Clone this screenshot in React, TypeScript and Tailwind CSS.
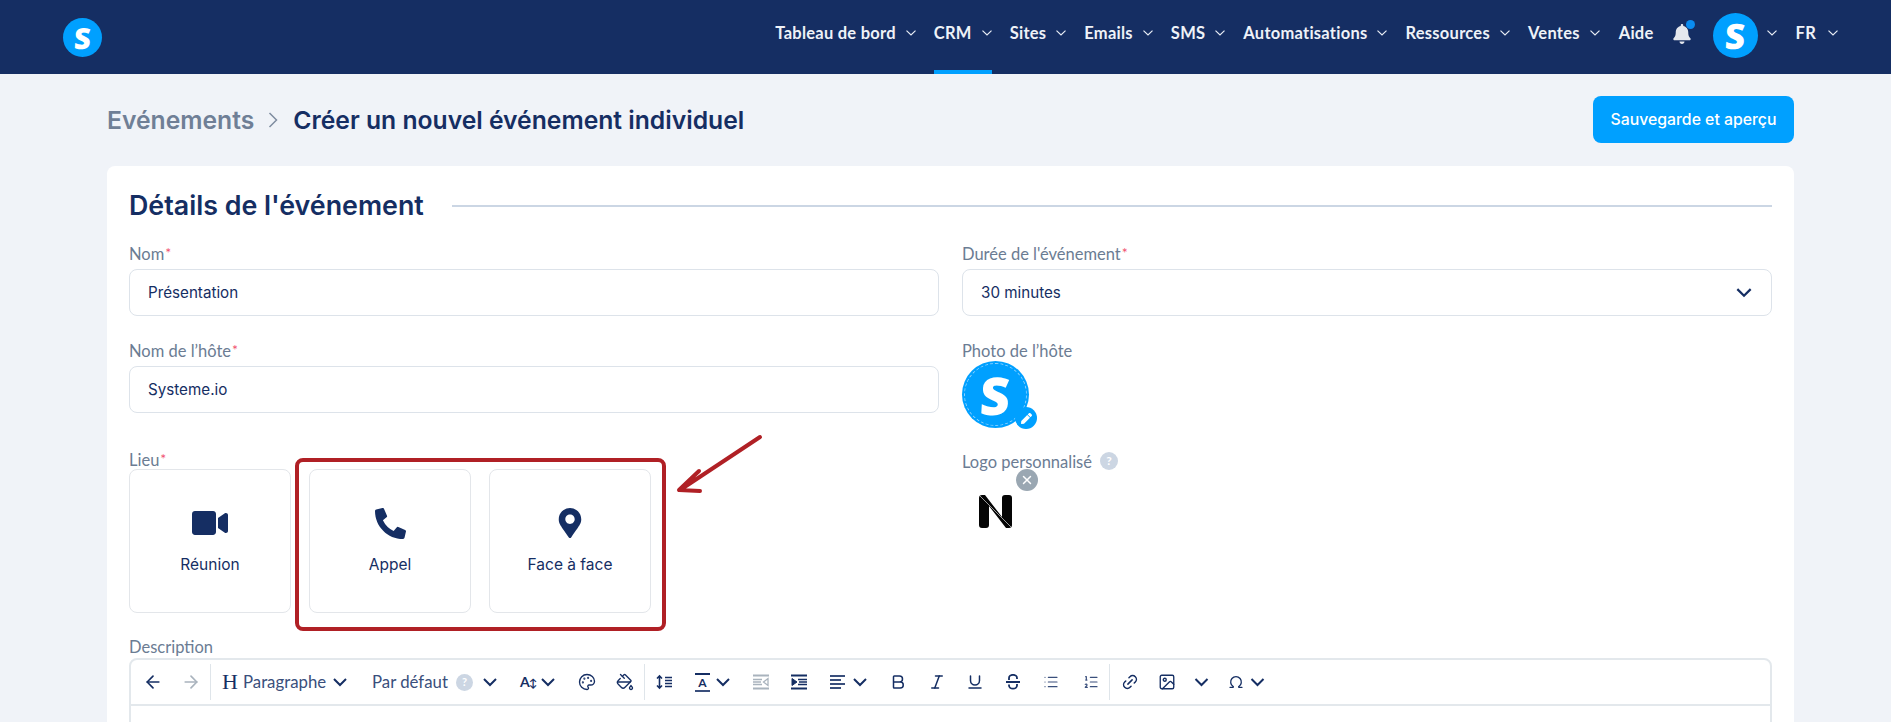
import React from "react";
import { FaBell, FaVideo, FaPhoneAlt, FaMapMarkerAlt, FaPen } from "react-icons/fa";
import { ArrowLeft, ArrowRight, Palette, PaintBucket, Bold, Italic, Underline, List, ListOrdered, Link2, Image, Omega, X } from "lucide-react";

const lato = "font-['Lato','Noto_Sans',sans-serif]";
const inter = "font-['Inter','Liberation_Sans',sans-serif]";
const navText = "text-[16.5px] tracking-[0.25px] font-bold text-[#eef2f8] whitespace-nowrap leading-none pb-[8px]";

function LogoS({ size }: { size: string }) {
  return (
    <span className={`font-['Open_Sans',sans-serif] font-extrabold text-white leading-none inline-block -skew-x-3 ${size}`}>S</span>
  );
}

function NavChev({ className = "" }: { className?: string }) {
  return (
    <svg viewBox="0 0 10 6" className={"w-[10px] h-[6px] shrink-0 " + className} fill="none" stroke="#e8edf5" strokeWidth="1.2">
      <polyline points="0.5,0.6 5,5 9.5,0.6" />
    </svg>
  );
}

function Chev({ dim = "w-[14px] h-[9px]", className = "" }: { dim?: string; className?: string }) {
  return (
    <svg viewBox="0 0 14 9" className={dim + " shrink-0 " + className} fill="none" stroke="#152e63" strokeWidth="2">
      <polyline points="1,1 7,7 13,1" />
    </svg>
  );
}

function NavItem({ label, active }: { label: string; active?: boolean }) {
  return (
    <div className="relative flex h-[74px] items-center ml-[18px]">
      <span className={navText}>{label}</span>
      <NavChev className="ml-[10px] mb-[8px]" />
      {active && <div className="absolute bottom-0 left-0 right-0 h-[4px] bg-[#00a0ff]" />}
    </div>
  );
}

function Label({ text, req, className = "" }: { text: string; req?: boolean; className?: string }) {
  return (
    <div className={`${lato} h-[20px] pt-[2px] flex items-center text-[16.5px] leading-[20px] text-[#6b7c93] ${className}`}>
      {text}
      {req && <span className="text-[#f0506e] text-[14px] ml-[1px] -mt-[3px]">*</span>}
    </div>
  );
}

function Field({ value, chevron }: { value: string; chevron?: boolean }) {
  return (
    <div className={`${inter} mt-[6px] h-[47px] pt-[1px] rounded-[8px] border border-[#dde3ea] bg-white flex items-center justify-between pl-[18px] pr-[19px] text-[15.2px] text-[#152e63]`}>
      <span>{value}</span>
      {chevron && <Chev dim="w-[16px] h-[10px]" />}
    </div>
  );
}

function LocationCard({ icon, label }: { icon: React.ReactNode; label: string }) {
  return (
    <div className="w-[162px] h-[144px] rounded-[8px] border border-[#e3e6ea] bg-white flex flex-col items-center">
      <div className="h-[32px] mt-[37px] flex items-center justify-center text-[#152e63]">{icon}</div>
      <div className={`${inter} mt-[15px] text-[15.5px] font-normal text-[#152e63] leading-[22px]`}>{label}</div>
    </div>
  );
}

function Slot({ w, className = "", children }: { w: string; className?: string; children: React.ReactNode }) {
  return <div className={`flex justify-center items-center shrink-0 ${w} ${className}`}>{children}</div>;
}

function Sep({ className = "" }: { className?: string }) {
  return <div className={`w-px h-[36px] bg-[#dfe5ea] shrink-0 ${className}`} />;
}

const ic = "w-[18px] h-[18px] shrink-0";

function Indent({ color, flip }: { color: string; flip?: boolean }) {
  return (
    <svg viewBox="0 0 16 16" className="w-[16px] h-[16px] shrink-0" fill="none" stroke={color} strokeWidth="1.8">
      <path d="M0 1.5h16M0 14.5h16" strokeWidth="2" />
      {flip ? (
        <>
          <path d="M0 5.5h9M0 8h8M0 10.5h9" strokeWidth="1.3" />
          <path d="M15 4.5v7L10.5 8z" strokeWidth="1.3" />
        </>
      ) : (
        <>
          <path d="M7 5.5h9M8 8h8M7 10.5h9" strokeWidth="1.5" />
          <path d="M1 4.5v7L6 8z" fill={color} strokeWidth="1" />
        </>
      )}
    </svg>
  );
}

function Toolbar() {
  return (
    <div className={`${lato} h-[46px] flex items-center pl-[15px] border-b-2 border-[#e3e8ec] text-[#3a4f7c] text-[16.8px] whitespace-nowrap`}>
      <Slot w="w-[14px]"><ArrowLeft className="w-[20px] h-[20px] shrink-0" color="#152e63" strokeWidth={2} /></Slot>
      <Slot w="w-[14px]" className="ml-[24px]"><ArrowRight className="w-[20px] h-[20px] shrink-0" color="#a9b3bd" strokeWidth={2} /></Slot>
      <Sep className="ml-[12px]" />
      <Slot w="w-[16px]" className="ml-[11px]"><span className="font-['Liberation_Serif',serif] text-[22px] leading-none text-[#152e63]">H</span></Slot>
      <div className="w-[85px] ml-[5px]">Paragraphe</div>
      <Chev className="ml-[5px]" />
      <div className="w-[75px] ml-[25px]">Par défaut</div>
      <div className="w-[17px] h-[17px] ml-[9px] rounded-full bg-[#ccd6e3] text-white text-[11px] font-bold flex items-center justify-center shrink-0">?</div>
      <Chev className="ml-[10px]" />
      <div className="w-[17px] ml-[23px] text-[14px] font-bold text-[#152e63] flex items-center leading-none">A<span className="text-[11px] -ml-[1px]">↕</span></div>
      <Chev className="ml-[4px]" />
      <Slot w="w-[16px]" className="ml-[24px]"><Palette className={ic} color="#152e63" strokeWidth={1.8} /></Slot>
      <Slot w="w-[15px]" className="ml-[22px]"><PaintBucket className={ic} color="#152e63" strokeWidth={1.8} /></Slot>
      <Sep className="ml-[12px]" />
      <div className="w-[16px] ml-[11px]">
        <svg viewBox="0 0 16 16" className="w-[16px] h-[16px]" fill="none" stroke="#152e63" strokeWidth="1.6">
          <path d="M3.5 2v12M1 4.5 3.5 2 6 4.5M1 11.5 3.5 14 6 11.5M9 3.5h7M9 6.5h7M9 9.5h7M9 12.5h7" />
        </svg>
      </div>
      <div className="w-[15px] ml-[23px] flex flex-col items-center">
        <div className="w-full h-[2px] bg-[#152e63]" />
        <span className="text-[12px] leading-[13px] text-[#152e63] font-bold my-[1px]">A</span>
        <div className="w-full h-[2px] bg-[#3a4f7c]" />
      </div>
      <Chev className="ml-[5px]" dim="w-[16px] h-[9px]" />
      <Slot w="w-[16px]" className="ml-[22px]"><Indent color="#a9b3bd" flip /></Slot>
      <Slot w="w-[15px]" className="ml-[22px]"><Indent color="#152e63" /></Slot>
      <div className="ml-[24px] w-[15px] flex flex-col gap-[2.5px] shrink-0">
        <div className="w-[15px] h-[1.5px] bg-[#3a4f7c]" />
        <div className="w-[11px] h-[1.5px] bg-[#3a4f7c]" />
        <div className="w-[15px] h-[1.5px] bg-[#3a4f7c]" />
        <div className="w-[11px] h-[1.5px] bg-[#3a4f7c]" />
      </div>
      <Chev className="ml-[8px]" />
      <Slot w="w-[13px]" className="ml-[24px]"><Bold className={ic} color="#152e63" strokeWidth={2} /></Slot>
      <Slot w="w-[11px]" className="ml-[27px]"><Italic className={ic} color="#152e63" strokeWidth={2} /></Slot>
      <Slot w="w-[14px]" className="ml-[26px]"><Underline className={ic} color="#152e63" strokeWidth={2} /></Slot>
      <Slot w="w-[14px]" className="ml-[24px]">
        <svg viewBox="0 0 14 16" className="w-[14px] h-[16px] shrink-0" fill="none" stroke="#152e63" strokeWidth="1.8">
          <path d="M0 8h14M3 6V4a4 3.2 0 0 1 8 0v1M3 10.5v1a4 3.2 0 0 0 8 0V10" />
        </svg>
      </Slot>
      <Slot w="w-[13px]" className="ml-[24px]"><List className="w-[16px] h-[16px] shrink-0" color="#3a4f7c" strokeWidth={1.8} /></Slot>
      <Slot w="w-[13px]" className="ml-[27px]"><ListOrdered className="w-[16px] h-[16px] shrink-0" color="#3a4f7c" strokeWidth={1.8} /></Slot>
      <Sep className="ml-[12px]" />
      <Slot w="w-[15px]" className="ml-[12px]"><Link2 className={ic + " -rotate-45"} color="#152e63" strokeWidth={2} /></Slot>
      <Slot w="w-[14px]" className="ml-[23px]"><Image className={ic} color="#152e63" strokeWidth={1.8} /></Slot>
      <Chev className="ml-[20px]" dim="w-[15px] h-[9px]" />
      <Slot w="w-[13px]" className="ml-[20px]"><Omega className="w-[16px] h-[16px] shrink-0" color="#152e63" strokeWidth={2} /></Slot>
      <Chev className="ml-[8px]" dim="w-[15px] h-[9px]" />
    </div>
  );
}

export default function App() {
  return (
    <div className={`${inter} relative h-[722px] overflow-hidden bg-[#f0f3f8]`}>
      <header className="h-[74px] bg-[#152e63] flex items-center justify-between pl-[63px] pr-[53px]">
        <div className="w-[39px] h-[39px] rounded-full bg-[#00a0ff] flex items-center justify-center">
          <LogoS size="text-[29px]" />
        </div>
        <nav className={`${lato} flex items-center`}>
          <NavItem label="Tableau de bord" />
          <NavItem label="CRM" active />
          <NavItem label="Sites" />
          <NavItem label="Emails" />
          <NavItem label="SMS" />
          <NavItem label="Automatisations" />
          <NavItem label="Ressources" />
          <NavItem label="Ventes" />
          <span className={`ml-[19px] ${navText}`}>Aide</span>
          <div className="relative ml-[19px] mb-[6px]">
            <FaBell className="w-[18px] h-[20px] text-[#e5e8ee]" />
            <div className="absolute -top-[4px] -right-[4px] w-[9px] h-[9px] rounded-full bg-[#0a8cf0]" />
          </div>
          <div className="ml-[22px] mb-[3px] w-[45px] h-[45px] rounded-full bg-[#00a0ff] flex items-center justify-center">
            <LogoS size="text-[35px]" />
          </div>
          <NavChev className="ml-[9px] mb-[8px]" />
          <span className={`ml-[19px] ${navText}`}>FR</span>
          <NavChev className="ml-[12px] mb-[8px]" />
        </nav>
      </header>

      <main className="pl-[107px] pr-[97px]">
        <div className="flex items-center justify-between h-[92px]">
          <div className="flex items-center text-[24.7px] font-semibold leading-none">
            <span className="text-[#6f7f96]">Evénements</span>
            <svg viewBox="0 0 10 16" className="w-[10px] h-[16px] ml-[14px] mr-[15px]" fill="none" stroke="#7f8da0" strokeWidth="1.5"><polyline points="1.5,1 8.5,8 1.5,15" /></svg>
            <span className="text-[#152e63]">Créer un nouvel événement individuel</span>
          </div>
          <button className="w-[201px] h-[47px] -mt-[1px] rounded-[8px] bg-[#00a0ff] text-white text-[15.8px] font-medium">Sauvegarde et aperçu</button>
        </div>

        <section className="rounded-[8px] bg-white px-[22px] pt-[19px] h-[600px]">
          <div className="flex items-center h-[40px]">
            <h1 className="text-[26.8px] font-semibold text-[#152e63] whitespace-nowrap leading-none">Détails de l'événement</h1>
            <div className="ml-[28px] flex-1 h-[2px] mt-[2px] bg-[#cbd6e4]" />
          </div>

          <div className="grid grid-cols-2 gap-x-[23px] mt-[18px]">
            <div className="flex flex-col">
              <Label text="Nom" req />
              <Field value="Présentation" />
              <Label text="Nom de l’hôte" req className="mt-[24px]" />
              <Field value="Systeme.io" />
              <Label text="Lieu" req className="mt-[36px]" />
              <div className="flex gap-[18px]">
                <LocationCard icon={<FaVideo className="w-[36px] h-[32px]" />} label="Réunion" />
                <LocationCard icon={<FaPhoneAlt className="w-[31px] h-[31px]" />} label="Appel" />
                <LocationCard icon={<FaMapMarkerAlt className="w-[24px] h-[30px]" />} label="Face à face" />
              </div>
            </div>
            <div className="flex flex-col">
              <Label text="Durée de l'événement" req />
              <Field value="30 minutes" chevron />
              <Label text="Photo de l’hôte" className="mt-[24px]" />
              <div className="relative mt-[1px] w-[67px] h-[67px] rounded-full bg-[#00a0ff] flex items-center justify-center">
                <div className="absolute inset-[2px] rounded-full border border-dashed border-[#8fd3ff]" />
                <LogoS size="text-[52px]" />
                <div className="absolute -right-[8px] -bottom-[1px] w-[22px] h-[22px] rounded-full bg-[#00a0ff] flex items-center justify-center">
                  <FaPen className="w-[11px] h-[11px] text-white" />
                </div>
              </div>
              <div className="flex items-center mt-[23px]">
                <Label text="Logo personnalisé" />
                <div className={`${lato} ml-[8px] w-[18px] h-[18px] rounded-full bg-[#ccd6e3] text-white text-[12px] font-bold flex items-center justify-center`}>?</div>
              </div>
              <div className="relative w-[67px] h-[57px]">
                <svg viewBox="0 0 33 33" className="absolute left-[17px] top-[24px] w-[33px] h-[33px]">
                  <path d="M3 0h3l17 22V3a3 3 0 0 1 3-3h4a3 3 0 0 1 3 3v27a3 3 0 0 1-3 3h-3L10 11v19a3 3 0 0 1-3 3H3a3 3 0 0 1-3-3V3a3 3 0 0 1 3-3z" fill="#050505" />
                  <line x1="1" y1="1" x2="32" y2="32" stroke="#ffffff" strokeWidth="0.6" />
                </svg>
                <div className="absolute left-[54px] -top-[2px] w-[22px] h-[22px] rounded-full bg-[#9aa7b2] flex items-center justify-center">
                  <X className="w-[14px] h-[14px] text-white" strokeWidth={2.5} />
                </div>
              </div>
            </div>
          </div>

          <Label text="Description" className="mt-[23px] mb-[2px]" />
          <div className="h-[300px] rounded-[8px] border-2 border-[#e3e8ec]">
            <Toolbar />
          </div>
        </section>
      </main>

      <div className="absolute left-[295px] top-[458px] w-[371px] h-[173px] rounded-[8px] border-[4px] border-[#b02025] pointer-events-none" />
      <svg className="absolute left-[670px] top-[430px] w-[100px] h-[70px] pointer-events-none" viewBox="0 0 100 70" fill="none" stroke="#b02025" strokeWidth="4" strokeLinecap="round" strokeLinejoin="round">
        <path d="M90 7 10 60M29 41 9 60 30 61" />
      </svg>
    </div>
  );
}
